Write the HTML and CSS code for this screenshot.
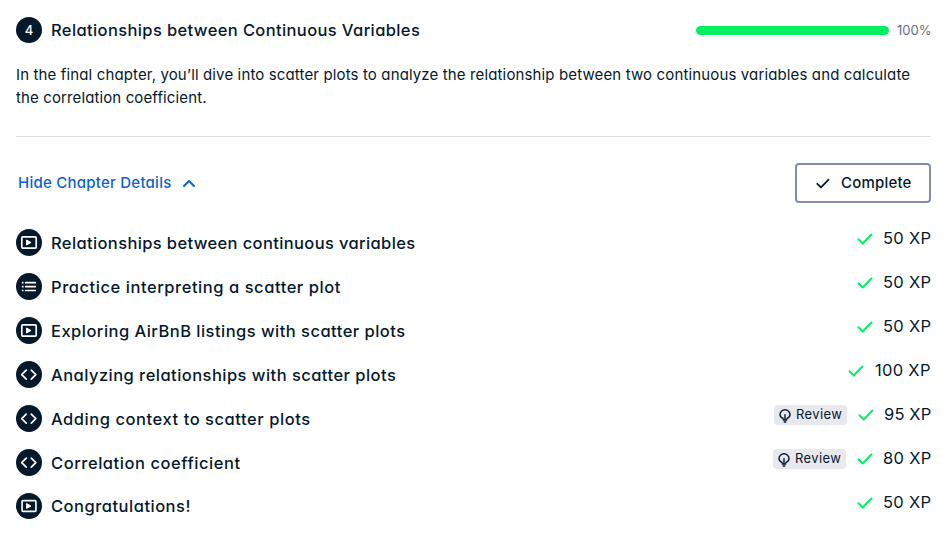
FILE: index.html
```html
<!DOCTYPE html>
<html lang="en">
<head>
<meta charset="utf-8">
<title>Relationships between Continuous Variables</title>
<link rel="stylesheet" href="styles.css">
</head>
<body>
<svg class="sprite" aria-hidden="true">
  <symbol id="video" viewBox="0 0 26 27"><rect x="5.8" y="7.9" width="14.4" height="11.2" rx="1" fill="none" stroke="#fff" stroke-width="1.7"/><path d="M10.5 11v5l4.500-2.500z" fill="#fff" stroke="#fff" stroke-width="1" stroke-linejoin="round"/></symbol>
  <symbol id="list" viewBox="0 0 26 27"><path d="M9.700 9.700h9.600M9.700 13.600h9.600M9.700 17.500h9.600" stroke="#fff" stroke-width="1.7" stroke-linecap="round"/><path d="M5.900 9.700h1.600M5.900 13.600h1.600M5.900 17.500h1.600" stroke="#fff" stroke-width="1.7"/></symbol>
  <symbol id="code" viewBox="0 0 26 27"><path d="M10.200 9.200 5.700 13.600l4.500 4.500M15.300 9.200l4.500 4.400-4.500 4.500" fill="none" stroke="#fff" stroke-width="1.7" stroke-linecap="round" stroke-linejoin="round"/></symbol>
  <symbol id="check" viewBox="0 0 16 12"><path d="m1.500 6.300 4.200 4.200 8.700-9" fill="none" stroke="currentColor" stroke-width="2" stroke-linecap="round" stroke-linejoin="round"/></symbol>
  <symbol id="bulb" viewBox="0 0 12 14"><path d="M4 10.200V9.500C2 8.600 1 7.200 1 5.500a5 4.700 0 0 1 10 0c0 1.700-1 3.100-3 4v.7M6 5.300v5.500M3.800 11h4.400M4.700 13h2.600" fill="none" stroke="currentColor" stroke-width="1.4"/></symbol>
</svg>
<main class="chapter">
  <header class="head">
    <span class="number">4</span>
    <h4 class="title">Relationships between Continuous Variables</h4>
    <div class="progress"></div>
    <span class="percent">100%</span>
  </header>
  <p class="description"><span class="line-one">In the final chapter, you’ll dive into scatter plots to analyze the relationship between two continuous variables and calculate</span> <span class="line-two">the correlation coefficient.</span></p>
  <div class="actions">
    <a class="toggle"><span>Hide Chapter Details</span><svg width="14" height="9" viewBox="0 0 14 9"><path d="m2 7 5-5 5 5" fill="none" stroke="currentColor" stroke-width="2" stroke-linecap="round" stroke-linejoin="round"/></svg></a>
    <button class="complete"><svg width="14" height="11"><use href="#check"/></svg><span>Complete</span></button>
  </div>
  <ul class="exercises">
    <li><svg class="kind"><use href="#video"/></svg><span class="name n1">Relationships between continuous variables</span><span class="score"><svg class="done"><use href="#check"/></svg><span class="xp">50 XP</span></span></li>
    <li><svg class="kind"><use href="#list"/></svg><span class="name n2">Practice interpreting a scatter plot</span><span class="score"><svg class="done"><use href="#check"/></svg><span class="xp">50 XP</span></span></li>
    <li><svg class="kind"><use href="#video"/></svg><span class="name n3">Exploring AirBnB listings with scatter plots</span><span class="score"><svg class="done"><use href="#check"/></svg><span class="xp">50 XP</span></span></li>
    <li><svg class="kind"><use href="#code"/></svg><span class="name n4">Analyzing relationships with scatter plots</span><span class="score"><svg class="done"><use href="#check"/></svg><span class="xp hundred">100 XP</span></span></li>
    <li><svg class="kind"><use href="#code"/></svg><span class="name n5">Adding context to scatter plots</span><span class="score"><span class="review"><svg><use href="#bulb"/></svg>Review</span><svg class="done"><use href="#check"/></svg><span class="xp ninety">95 XP</span></span></li>
    <li><svg class="kind"><use href="#code"/></svg><span class="name n6">Correlation coefficient</span><span class="score"><span class="review"><svg><use href="#bulb"/></svg>Review</span><svg class="done"><use href="#check"/></svg><span class="xp">80 XP</span></span></li>
    <li><svg class="kind last"><use href="#video"/></svg><span class="name n7">Congratulations!</span><span class="score"><svg class="done"><use href="#check"/></svg><span class="xp">50 XP</span></span></li>
  </ul>
</main>
</body>
</html>
```
FILE: styles.css
```css
* { box-sizing: border-box; }
body { margin: 0; background: #fff; color: #05192d; font-family: Inter, "Liberation Sans", sans-serif; font-feature-settings: "cv11"; white-space: nowrap; }
.sprite { display: none; }
.chapter { padding: 17px 15px 0 16px; }
.head { display: flex; align-items: center; height: 26px; }
.number { width: 26px; height: 26px; border-radius: 50%; background: #05192d; color: #fff; font-size: 13px; font-weight: 500; line-height: 26px; text-align: center; }
.title { margin: 0 auto 0 9px; font-size: 16.5px; font-weight: 550; line-height: 26px; letter-spacing: .38px; }
.progress { width: 193px; height: 9px; margin-right: 8px; border-radius: 5px; background: #03ef62; }
.percent { width: 34px; color: #65707c; font-size: 13px; }
.description { margin: 20px 0 27px; font-size: 15px; line-height: 23px; letter-spacing: .135px; }
.description span { display: block; }
.description .line-two { letter-spacing: .12px; }
.actions { display: flex; justify-content: space-between; align-items: center; border-top: 1px solid #dddfe2; padding-top: 26px; }
.toggle { display: flex; align-items: center; gap: 11px; padding-left: 2px; color: #0a62d0; font-size: 15px; font-weight: 550; letter-spacing: .24px; }
.toggle span, .complete span { margin-top: -2px; }
.complete { display: flex; align-items: center; gap: 11px; width: 136px; height: 40px; padding: 0 0 0 19px; border: 2px solid #848bae; border-radius: 4px; background: #fff; color: #05192d; font: inherit; font-size: 15px; font-weight: 550; letter-spacing: .2px; }
.exercises { margin: 17px 0 0; padding: 0; list-style: none; }
.exercises li { display: flex; align-items: center; height: 44px; }
.kind { width: 26px; height: 27px; border-radius: 50%; background: #05192d; }
.last { height: 26px; margin-bottom: 1px; }
.name { margin: 1px auto 0 9px; font-size: 16.5px; font-weight: 550; }
.n1 { letter-spacing: .37px; }
.n2 { letter-spacing: .55px; }
.n3 { letter-spacing: .47px; }
.n4 { letter-spacing: .46px; }
.n5 { letter-spacing: .55px; }
.n6 { letter-spacing: .55px; }
.n7 { margin-top: -1px; letter-spacing: .5px; }
.score { display: flex; align-items: center; margin-bottom: 8px; }
.done { width: 16px; height: 12px; margin: 1px 10px 0 0; color: #03ef62; }
.xp { width: 48px; font-size: 16.5px; letter-spacing: .3px; }
.hundred { width: 57px; padding-left: 1px; }
.ninety { width: 47px; letter-spacing: .15px; }
.review { display: flex; align-items: center; width: 73px; height: 20px; margin: 2px 11px 0 0; padding: 0 0 1px 5px; border-radius: 4px; background: #e8e8ef; font-size: 13px; letter-spacing: .4px; line-height: 17px; }
.review svg { width: 12px; height: 14px; margin: 2px 5px 0 0; }
```
